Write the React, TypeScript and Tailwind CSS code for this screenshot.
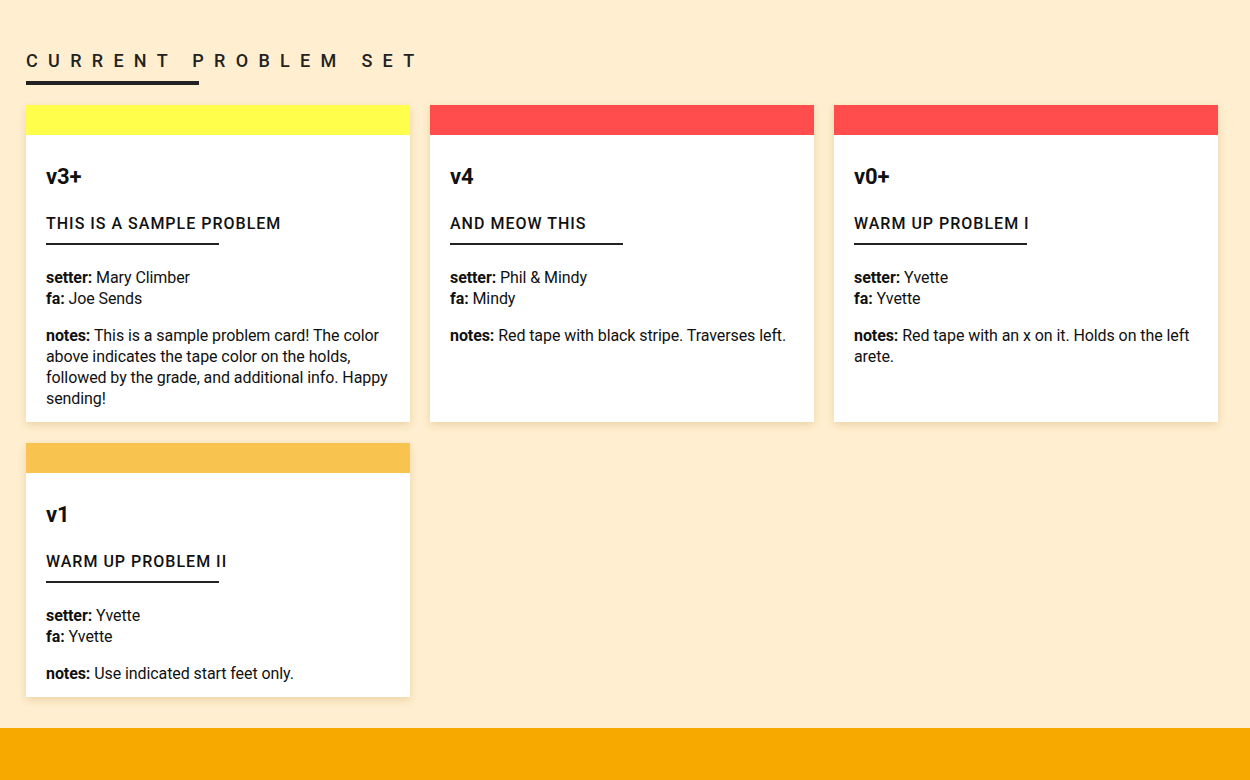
type Problem = {
  color: string;
  grade: string;
  name: string;
  setter: string;
  fa: string;
  notes: string;
};

const PROBLEMS: Problem[] = [
  {
    color: "bg-[#ffff4b]",
    grade: "v3+",
    name: "This is a sample problem",
    setter: "Mary Climber",
    fa: "Joe Sends",
    notes:
      "This is a sample problem card! The color above indicates the tape color on the holds, followed by the grade, and additional info. Happy sending!",
  },
  {
    color: "bg-[#ff4d4d]",
    grade: "v4",
    name: "And meow this",
    setter: "Phil & Mindy",
    fa: "Mindy",
    notes: "Red tape with black stripe. Traverses left.",
  },
  {
    color: "bg-[#ff4d4d]",
    grade: "v0+",
    name: "Warm up problem I",
    setter: "Yvette",
    fa: "Yvette",
    notes: "Red tape with an x on it. Holds on the left arete.",
  },
  {
    color: "bg-[#f9c34f]",
    grade: "v1",
    name: "Warm up problem II",
    setter: "Yvette",
    fa: "Yvette",
    notes: "Use indicated start feet only.",
  },
];

function ProblemCard({ p }: { p: Problem }) {
  return (
    <div className="flex flex-col bg-white shadow-[0_3px_8px_rgba(160,110,20,0.22)]">
      {/* tape colour */}
      <div className={`h-[30px] ${p.color}`} />

      <div className="flex flex-col px-5 pt-[29px] pb-[13px] text-[16px] leading-[21px] tracking-[-0.08px] text-[#111]">
        <h3 className="text-[22px] leading-[26px] font-bold">{p.grade}</h3>
        <p className="mt-[23px] font-medium uppercase tracking-[1px] text-[#111]">
          {p.name}
        </p>
        <div className="mt-[9px] h-[2px] w-[173px] bg-[#222]" />

        <p className="mt-[22px]">
          <span className="font-bold">setter:</span> {p.setter}
        </p>
        <p>
          <span className="font-bold">fa:</span> {p.fa}
        </p>

        <p className="mt-4">
          <span className="font-bold">notes:</span> {p.notes}
        </p>
      </div>
    </div>
  );
}

export default function App() {
  return (
    <div className="min-h-[780px] flex flex-col bg-[#ffefd0] font-['Roboto',sans-serif]">
      {/* ================= PROBLEM SET ================= */}
      <section className="flex flex-col px-[26px] pt-[47px] pb-[31px]">
        <h2 className="text-lg leading-7 font-medium uppercase tracking-[10.3px] text-[#222]">
          Current Problem Set
        </h2>
        <div className="mt-[6px] h-[4px] w-[173px] bg-[#222]" />

        <div className="mt-5 grid grid-cols-[384px_384px_384px] gap-x-5 gap-y-[21px]">
          {PROBLEMS.map((p, i) => (
            <ProblemCard key={i} p={p} />
          ))}
        </div>
      </section>

      {/* ================= FOOTER ================= */}
      <footer className="h-[52px] flex-1 bg-[#f8a900]" />
    </div>
  );
}
